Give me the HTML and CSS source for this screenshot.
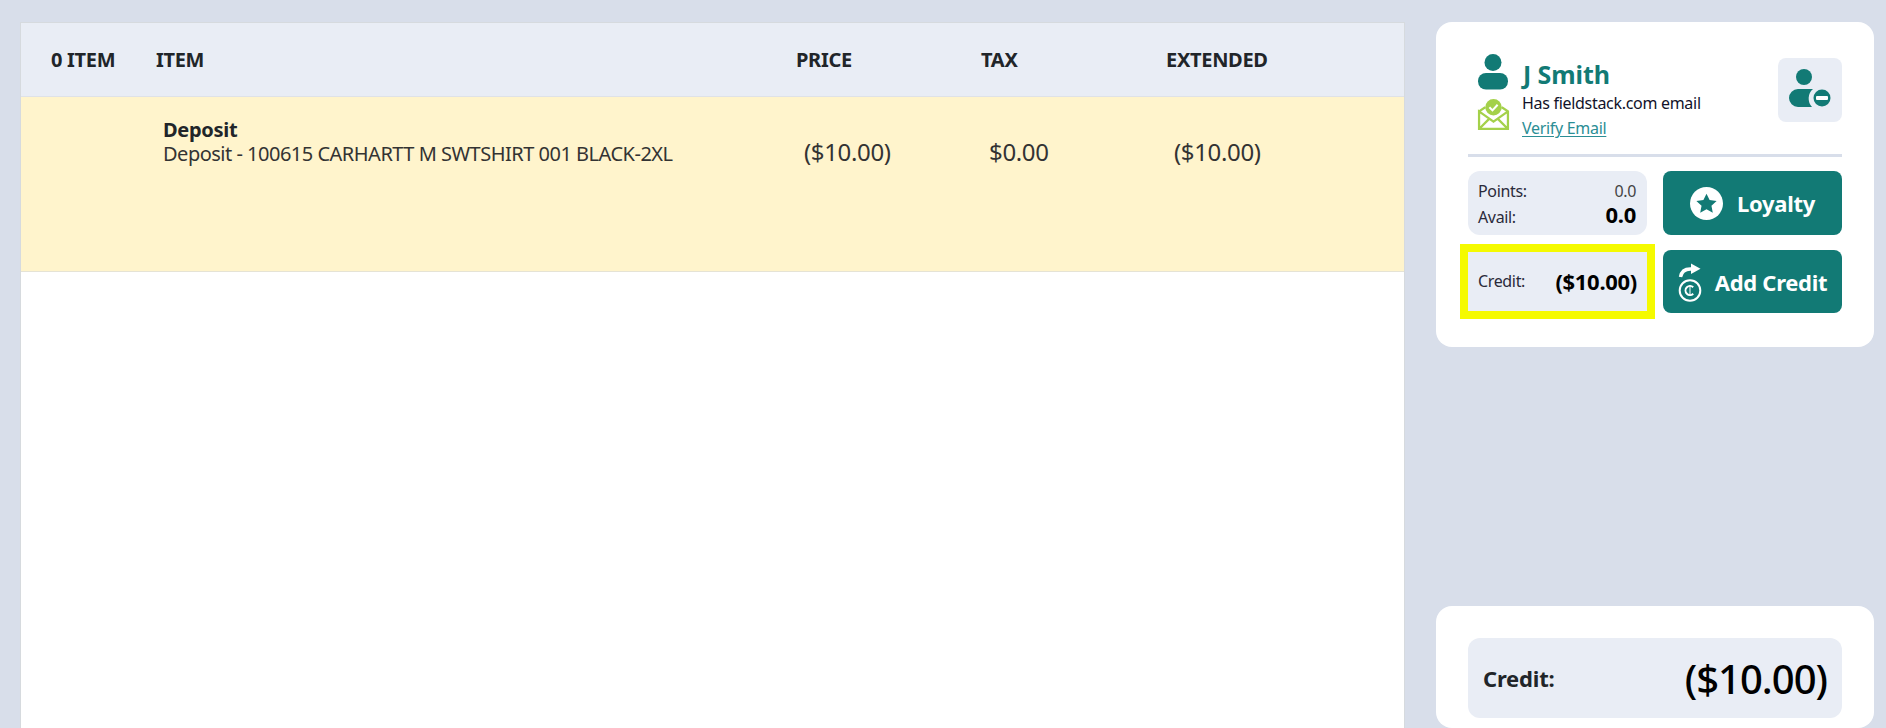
FILE: index.html
```html
<!DOCTYPE html>
<html lang="en">
<head>
<meta charset="utf-8">
<title>Deposit</title>
<link rel="stylesheet" href="styles.css">
</head>
<body>
<div class="page">
  <main class="table">
    <div class="table-head">
      <div>0 ITEM</div><div>ITEM</div><div>PRICE</div><div>TAX</div><div>EXTENDED</div>
    </div>
    <div class="table-row">
      <div></div>
      <div class="desc"><div class="desc-title">Deposit</div><div>Deposit - 100615 CARHARTT M SWTSHIRT 001 BLACK-2XL</div></div>
      <div class="num">($10.00)</div>
      <div class="num">$0.00</div>
      <div class="num">($10.00)</div>
    </div>
  </main>
  <aside class="side">
    <section class="card customer">
      <div class="cust-top">
        <div class="cust-icons">
          <svg class="ic-user" viewBox="0 0 30 36"><circle cx="15" cy="8.500" r="8.500" fill="#127a75"/><rect x="0" y="19" width="30" height="16.500" rx="8" fill="#127a75"/></svg>
          <svg class="ic-mail" viewBox="0 0 32 32" fill="none" stroke="#a4d14a" stroke-width="2.200"><path d="M2 13 L8 9 M24 9 L30 13 V30 H2 V13 L16 23 L30 13 M2 30 L12 20 M30 30 L20 20"/><circle cx="16" cy="9" r="8" fill="#a4d14a" stroke="none"/><path d="M12 9 L15 12 L20 6.500" stroke="#fff" stroke-width="2"/></svg>
        </div>
        <div class="cust-info">
          <div class="cust-name">J Smith</div>
          <div class="cust-mail">Has fieldstack.com email</div>
          <a class="cust-verify" href="#">Verify Email</a>
        </div>
        <button class="icon-btn" type="button" aria-label="Remove customer">
          <svg viewBox="0 0 42 38" width="42" height="38"><circle cx="15" cy="8" r="8" fill="#127a75"/><path d="M9 20 H24 A12.500 12.500 0 0 0 23 38 H9 A9 9 0 0 1 9 20 Z" fill="#127a75"/><circle cx="33" cy="29" r="8.500" fill="#127a75"/><rect x="27" y="27" width="12" height="4" rx="1" fill="#fff"/></svg>
        </button>
      </div>
      <div class="divider"></div>
      <div class="cust-grid">
        <div class="stat">
          <div class="stat-line"><span>Points:</span><span class="dim">0.0</span></div>
          <div class="stat-line"><span>Avail:</span><b class="big">0.0</b></div>
        </div>
        <button class="action" type="button">
          <svg viewBox="0 0 32 32" width="33" height="33"><circle cx="16" cy="16" r="16" fill="#fff"/><path d="M16 6.500 L19 12.700 L25.800 13.500 L20.800 18.200 L22.100 25 L16 21.600 L9.900 25 L11.200 18.200 L6.200 13.500 L13 12.700 Z" fill="#127a75"/></svg>
          <span>Loyalty</span>
        </button>
        <div class="stat credit">
          <span>Credit:</span><b class="big">($10.00)</b>
        </div>
        <button class="action add" type="button">
          <svg viewBox="0 0 24 40" width="24" height="40" fill="none" stroke="#fff"><path d="M2.500 15 C3.500 9 8 6.500 14 7" stroke-width="3.400"/><path d="M13 1.500 L22.500 6.800 L13 12 Z" fill="#fff" stroke="none"/><circle cx="12" cy="28.500" r="10.300" stroke-width="2"/><path d="M15.200 25.300 A4.500 4.500 0 1 0 15.200 31.700" stroke-width="2"/><path d="M12 23 V34" stroke-width="1"/></svg>
          <span>Add Credit</span>
        </button>
      </div>
    </section>
    <section class="card total">
      <div class="total-box"><b>Credit:</b><span class="total-val">($10.00)</span></div>
    </section>
  </aside>
</div>
</body>
</html>
```
FILE: styles.css
```css
* { box-sizing: border-box; }
html, body { margin: 0; height: 100%; overflow: hidden; }
body {
  background: #d8deea;
  font-family: "Noto Sans", "Open Sans", "Liberation Sans", sans-serif;
  color: #212529;
}
.page {
  display: grid;
  grid-template-columns: 1385px 438px;
  column-gap: 31px;
  padding: 22px 0 0 20px;
  height: 728px;
  align-items: stretch;
}
.table {
  background: #fff;
  border: 1px solid #d6dade;
  border-bottom: 0;
}
.table-head, .table-row {
  display: grid;
  grid-template-columns: 105px 640px 185px 185px 1fr;
  padding-left: 30px;
}
.table-head {
  height: 74px;
  align-items: center;
  background: #e9edf5;
  border-bottom: 1px solid #dfe2e7;
  font-size: 20px;
  font-weight: 700;
  letter-spacing: -0.3px;
}
.table-row {
  height: 175px;
  padding-top: 21px;
  background: #fff4cc;
  border-bottom: 1px solid #e5e3d5;
  font-size: 20px;
  line-height: 24px;
  letter-spacing: -0.5px;
  color: #333;
}
.desc { padding-left: 7px; }
.desc-title { font-weight: 700; color: #212529; letter-spacing: -0.3px; }
.num {
  padding: 22px 0 0 8px;
  font-size: 24px;
  letter-spacing: -0.35px;
}
.side {
  display: flex;
  flex-direction: column;
  justify-content: space-between;
}
.card { background: #fff; border-radius: 16px; }
.customer { height: 325px; padding: 29px 32px 0; }
.cust-top { display: flex; height: 103px; }
.cust-icons { width: 54px; display: flex; flex-direction: column; align-items: center; padding-right: 4px; }
.ic-user { width: 30px; height: 36px; margin-top: 3px; }
.ic-mail { width: 33px; height: 33px; margin-top: 8px; }
.cust-info { flex: 1; }
.cust-name {
  font-size: 25px;
  font-weight: 700;
  line-height: 30px;
  margin-top: 8px;
  padding-left: 1px;
  color: #127a75;
  letter-spacing: -0.1px;
}
.cust-mail { font-size: 16px; line-height: 24px; color: #12122a; letter-spacing: -0.3px; margin-top: 2px; }
.cust-verify { font-size: 16px; line-height: 26px; color: #2b8e95; letter-spacing: -0.3px; display: block; text-underline-offset: 2px; }
.icon-btn {
  width: 64px;
  height: 64px;
  margin-top: 7px;
  border: 0;
  padding: 0 0 4px;
  border-radius: 8px;
  background: #e9edf5;
  display: flex;
  align-items: center;
  justify-content: center;
}
.divider { height: 3px; background: #d8deea; }
.cust-grid {
  display: grid;
  grid-template-columns: 179px 179px;
  grid-template-rows: 64px 63px;
  column-gap: 16px;
  row-gap: 15px;
  margin-top: 14px;
}
.stat {
  background: #e9edf5;
  border-radius: 12px;
  padding: 9px 11px 0 10px;
  font-size: 16px;
  letter-spacing: -0.35px;
  color: #2a2a3a;
}
.stat-line { display: flex; justify-content: space-between; align-items: baseline; height: 23px; line-height: 23px; }
.dim { color: #444; }
.big { font-size: 22px; font-weight: 700; color: #000; letter-spacing: -0.3px; }
.credit {
  border-radius: 0;
  outline: 8px solid #f5fa00;
  display: flex;
  justify-content: space-between;
  align-items: center;
  padding: 0 10px 2px;
  margin: 2px 0;
}
.action {
  border: 0;
  border-radius: 8px;
  background: #127a75;
  color: #fff;
  font: 700 22px "Noto Sans", "Open Sans", sans-serif;
  letter-spacing: -0.3px;
  display: flex;
  align-items: center;
  justify-content: center;
  gap: 14px;
  padding: 0;
}
.add { gap: 13px; }
.total { height: 122px; padding: 32px 32px 0; }
.total-box {
  height: 80px;
  background: #e9edf5;
  border-radius: 12px;
  display: flex;
  justify-content: space-between;
  align-items: center;
  padding: 0 15px;
  font-size: 22px;
  letter-spacing: -0.2px;
}
.total-val { font-size: 40px; font-weight: 500; color: #000; letter-spacing: -1px; }
```
